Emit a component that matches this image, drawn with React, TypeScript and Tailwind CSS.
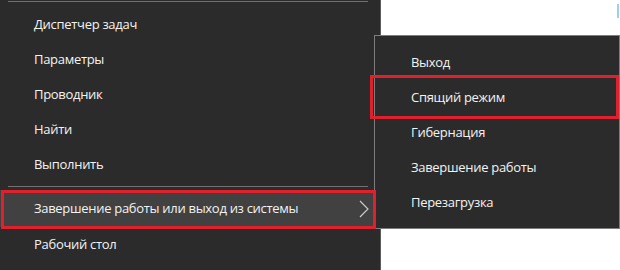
const mainItems = ['Диспетчер задач', 'Параметры', 'Проводник', 'Найти', 'Выполнить'];
const subItems = ['Выход', 'Спящий режим', 'Гибернация', 'Завершение работы', 'Перезагрузка'];

export default function App() {
    return (
        <div className="relative w-[620px] h-[270px] overflow-hidden bg-white font-['Open_Sans',sans-serif] text-[13px] tracking-[-0.3px] text-[#f3f3f3]">
            {/* main context menu */}
            <div className="w-[381px] h-full bg-[#2b2b2b] border-r border-[#5c5c5c] flex flex-col">
                <div className="mt-[1px] ml-[8px] w-[360px] h-px bg-[#717171]" />
                <div className="pt-[5px] flex flex-col">
                    {mainItems.map((item) => (
                        <div key={item} className="h-[35px] flex items-center pl-[34px]">
                            {item}
                        </div>
                    ))}
                </div>
                <div className="mt-[4px] ml-[8px] w-[360px] h-px bg-[#717171]" />
                <div className="mt-[3px] h-[37px] mr-[5px] bg-[#414141] flex items-center pl-[34px] pr-[6px]">
                    <span className="flex-1">Завершение работы или выход из системы</span>
                    {/* submenu arrow */}
                    <svg width="10" height="18" viewBox="0 0 10 18" className="text-[#cfcfcf]">
                        <polyline points="1,1 9,9 1,17" fill="none" stroke="currentColor" strokeWidth="1.1" />
                    </svg>
                </div>
                <div className="h-[35px] flex items-center pl-[34px]">Рабочий стол</div>
            </div>

            {/* flyout submenu */}
            <div className="absolute left-[374px] top-[35px] w-[246px] h-[194px] bg-[#2b2b2b] border border-[#7d7d7d] pt-[9px]">
                {subItems.map((item) => (
                    <div key={item} className="h-[35px] flex items-center pl-[36px]">
                        {item}
                    </div>
                ))}
            </div>

            {/* red annotation frames */}
            <div className="absolute left-[1px] top-[190px] w-[375px] h-[39px] border-[3px] border-[#e0202d]" />
            <div className="absolute left-[370px] top-[75px] w-[249px] h-[44px] border-[3px] border-[#e0202d]" />

            <div className="absolute right-[1px] top-[4px] w-[2px] h-[14px] bg-[#5ab0e8] opacity-60" />
        </div>
    );
}
